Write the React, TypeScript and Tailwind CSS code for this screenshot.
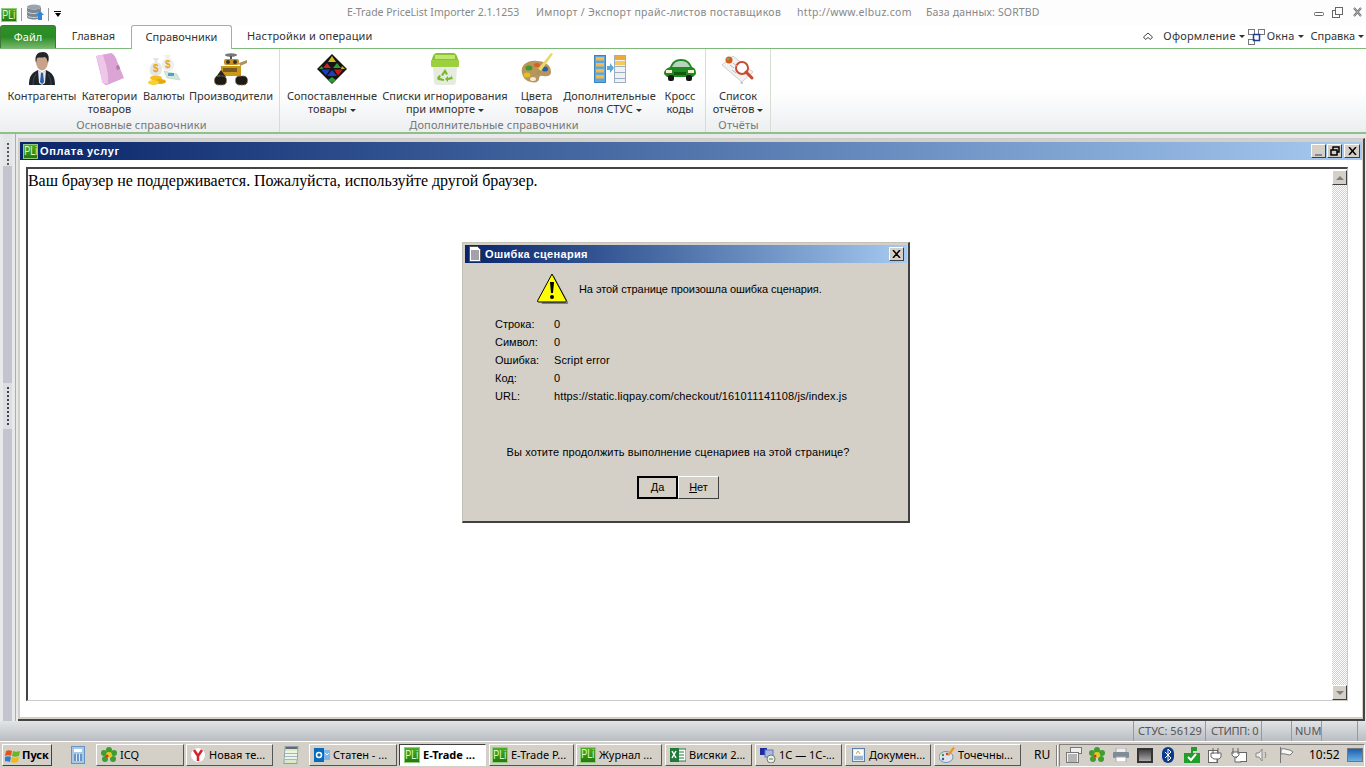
import React from "react";

const ui = "font-['Noto_Sans','Open_Sans',sans-serif]";

function PLi({ className = "" }: { className?: string }) {
  return (
    <span className={"flex items-center justify-center overflow-hidden bg-gradient-to-b from-[#4fae1e] to-[#237a0c] border border-[#8fce7a] text-[#dcf7cc] font-['Liberation_Sans',sans-serif] leading-none shrink-0 " + className}>
      <span className="scale-x-75 text-[12px]">PLi</span>
    </span>
  );
}

const Person = () => (
  <svg width="26" height="34" viewBox="0 0 26 34">
    <path d="M0 33c0-8 2-12 9-15l4 3 4-3c7 3 9 7 9 15z" fill="#1f242a" />
    <path d="M4 33c0-5 1-8 3-11M22 33c0-5-1-8-3-11" stroke="#3f4852" fill="none" />
    <path d="M9 18l4 3 4-3-1 13-3 2-3-2z" fill="#dfe6ee" />
    <path d="M12 21h2l1 9-2 2-2-2z" fill="#2a5ca6" />
    <ellipse cx="13" cy="10" rx="6" ry="8.500" fill="#c9a28c" />
    <path d="M7 11C5 3 9 0 14 0c5 0 7 4 5 11-1-3-1-5-3-6-3 1-6 0-8 1z" fill="#23262a" />
  </svg>
);
const Folder = () => (
  <svg width="30" height="32" viewBox="0 0 30 32">
    <path d="M1 3l15-3c3 1 5 4 6 8l7 17-17 7c-3 0-4-2-5-5z" fill="#dba4d5" />
    <path d="M7 30C6 20 4 11 1 3l15-3-8 2c3 9 6 19 5 29z" fill="#eec6ea" />
    <path d="M21 13l3-1 1 4-3 1z" fill="#b07aaa" />
  </svg>
);
const Money = () => (
  <svg width="34" height="31" viewBox="0 0 34 31">
    <path d="M3 14c1-4 3-5 5-6L6 4h6l-2 4c3 1 5 3 5 7 0 5-3 7-7 7s-6-3-5-8z" fill="#e6e6e2" />
    <path d="M15 9c1-3 3-4 4-5l-2-3h7l-2 3c3 1 5 4 5 7 0 4-3 6-6 6s-7-3-6-8z" fill="#efefeb" />
    <text x="6" y="18" fontSize="10" fontWeight="bold" fill="#e8a810" fontFamily="Liberation Sans">$</text>
    <text x="18" y="14" fontSize="10" fontWeight="bold" fill="#e8a810" fontFamily="Liberation Sans">$</text>
    <path d="M17 17l13 3 3 6-13-2z" fill="#cfe8d8" stroke="#b8ccb8" strokeWidth="0.500" />
    <rect x="21" y="19" width="6" height="3" fill="#4f9fd0" />
    <ellipse cx="9" cy="24" rx="6" ry="2.400" fill="#f4c020" />
    <ellipse cx="13" cy="27.500" rx="6" ry="2.400" fill="#e8a810" />
    <ellipse cx="6.500" cy="28.500" rx="5.500" ry="2.400" fill="#f8d030" />
  </svg>
);
const Robot = () => (
  <svg width="34" height="33" viewBox="0 0 34 33">
    <ellipse cx="17" cy="2" rx="6" ry="1.800" fill="#777" />
    <rect x="16" y="3" width="2" height="4" fill="#555" />
    <rect x="10" y="6" width="15" height="6" rx="2" fill="#c89020" />
    <circle cx="14" cy="9" r="2" fill="#333" />
    <circle cx="21" cy="9" r="2" fill="#333" />
    <path d="M25 10l8-3v3l-7 3z" fill="#b09060" />
    <rect x="7" y="13" width="20" height="10" fill="#c89a18" />
    <rect x="9" y="15" width="14" height="4" fill="#7a5c20" />
    <path d="M2 24l5-7 5 7z" fill="#2a2520" />
    <rect x="0.500" y="23" width="12" height="9" rx="4" fill="#1e1a16" stroke="#8b7a62" strokeDasharray="2 1" />
    <rect x="21.500" y="23" width="12" height="9" rx="4" fill="#1e1a16" stroke="#8b7a62" strokeDasharray="2 1" />
  </svg>
);
const Pyramid = () => (
  <svg width="30" height="30" viewBox="0 0 30 30">
    <path d="M15 0L30 15 15 30 0 15z" fill="#141414" />
    <path d="M15 2l4 6h-8z" fill="#d8b820" />
    <path d="M10 9l-4 5h8z" fill="#d02020" />
    <path d="M20 9l4 5h-8z" fill="#2f9a2f" />
    <path d="M4 15.500h9l-4 6z" fill="#1a40c0" />
    <path d="M26 15.500h-9l4 6z" fill="#c81818" />
    <path d="M15 16l5 6H10z" fill="#1a40c0" />
    <path d="M15 23l4 3-4 3-4-3z" fill="#2f9a2f" />
    <path d="M2 15l3-3 1 3z" fill="#2f9a2f" />
    <path d="M28 15l-3-3-1 3z" fill="#d8b820" />
  </svg>
);
const Bin = () => (
  <svg width="30" height="32" viewBox="0 0 30 32">
    <path d="M1 9l2-6C4 1 5 0 7 0h16c2 0 3 1 4 3l2 6z" fill="#86c232" />
    <rect x="1" y="7" width="28" height="7" rx="1" fill="#9dd040" />
    <rect x="5" y="2" width="20" height="4" fill="#bfe66e" />
    <path d="M3 14h24l-1 15c0 2-2 3-3 3H7c-2 0-3-1-3-3z" fill="#e6ebdf" />
    <path d="M15 16l3 5-2 1-1-2-2 3-2-1zM21 22l2 4-5 1v2l-3-3 3-3v2l3-1zM9 22l2 1-1 2 4 1v2l-6-1-1-2z" fill="#78b82c" />
  </svg>
);
const Palette = ({ s = 34 }: { s?: number }) => (
  <svg width={s} height={s * 32 / 34} viewBox="0 0 34 32">
    <path d="M2 20C0 12 8 7 17 8c8 0 14 4 14 11 0 4-4 5-8 4-3-1-4 1-4 3 0 3-4 4-8 3-5-1-8-4-9-9z" fill="#b8955a" />
    <ellipse cx="9" cy="15" rx="3.500" ry="2.500" fill="#3d9a2c" />
    <ellipse cx="17" cy="12" rx="3" ry="2" fill="#d86020" />
    <ellipse cx="7" cy="22" rx="3.500" ry="2.500" fill="#e0c020" />
    <ellipse cx="25" cy="16" rx="3" ry="2.500" fill="#2060b0" />
    <ellipse cx="13" cy="26" rx="3" ry="2" fill="#f0e8d8" />
    <path d="M31 0l2 1-12 17-3-2z" fill="#e8d86a" />
    <path d="M18 16l3 2-3 4-2-1z" fill="#b09060" />
  </svg>
);
const TrayPalette = () => (
  <svg width="16" height="16" viewBox="0 0 16 16">
    <ellipse cx="7" cy="10" rx="7" ry="5.500" fill="#dfe6f0" stroke="#7a90b0" />
    <circle cx="4" cy="8" r="1.200" fill="#3d9a2c" />
    <circle cx="8" cy="7" r="1.200" fill="#d83020" />
    <circle cx="4" cy="12" r="1.200" fill="#2060b0" />
    <path d="M14 0l2 1-6 8-2-1z" fill="#e89820" />
  </svg>
);
const Fields = () => (
  <svg width="32" height="28" viewBox="0 0 32 28">
    <rect x="0.500" y="0.500" width="11" height="27" fill="#5aa7e0" stroke="#3a84c0" />
    {[2, 8, 14, 20].map((y) => (
      <rect key={y} x="2" y={y} width="8" height="3.500" fill="#f5b848" />
    ))}
    <rect x="20.500" y="0.500" width="11" height="27" fill="#eef2f4" stroke="#9ab0c0" />
    <rect x="21" y="1" width="10" height="4" fill="#f0a838" />
    <rect x="21" y="6" width="10" height="4" fill="#f5c860" />
    <rect x="21" y="11" width="10" height="1" fill="#9ab0c0" />
    <rect x="21" y="17" width="10" height="1" fill="#9ab0c0" />
    <rect x="21" y="23" width="10" height="1" fill="#9ab0c0" />
    <path d="M13 11h3V8l4 5-4 5v-3h-3z" fill="#5aa7d8" />
  </svg>
);
const Car = () => (
  <svg width="34" height="24" viewBox="0 0 34 24">
    <path d="M1 17c0-4 3-6 6-7 2-5 5-8 11-8 6 0 9 3 11 8 3 1 4 3 4 7l-3 3H4z" fill="#1e8a20" />
    <path d="M9 10c2-4 4-6 9-6s7 2 9 6z" fill="#b8d4c0" />
    <rect x="3" y="13" width="6" height="3" fill="#f0f0d0" />
    <rect x="25" y="13" width="6" height="3" fill="#f0f0d0" />
    <rect x="11" y="15" width="12" height="3" fill="#0d5a10" />
    <rect x="5" y="18" width="6" height="6" rx="2" fill="#151515" />
    <rect x="23" y="18" width="6" height="6" rx="2" fill="#151515" />
  </svg>
);
const Report = () => (
  <svg width="34" height="30" viewBox="0 0 34 30">
    <path d="M1 11L12 2l20 16-11 10z" fill="#f2f2f0" stroke="#cfcfcf" />
    <path d="M21 28l1 2-3-1z" fill="#999" />
    <circle cx="8" cy="6" r="3.500" fill="#d85a20" />
    <circle cx="7" cy="5" r="1.500" fill="#70b040" />
    <circle cx="21" cy="14" r="6" fill="#fff" stroke="#c84a30" strokeWidth="2" />
    <path d="M25 18l6 6" stroke="#c84a30" strokeWidth="3" strokeLinecap="round" />
    <path d="M12 9l4 3M9 11l4 3M11 16l4 3" stroke="#bbb" />
  </svg>
);
const Db = () => (
  <svg width="18" height="17" viewBox="0 0 18 17">
    <ellipse cx="8" cy="3" rx="7" ry="2.500" fill="#9aa4ae" />
    <path d="M1 3v10c0 1.500 3 2.500 7 2.500s7-1 7-2.500V3c0 1.500-3 2.500-7 2.500S1 4.500 1 3z" fill="#7d8792" />
    <path d="M1 7c0 1.500 3 2.500 7 2.500s7-1 7-2.500M1 11c0 1.500 3 2.500 7 2.500s7-1 7-2.500" stroke="#d0d6dc" fill="none" />
    <path d="M14 7l4 4h-2v5h-4v-5h-2z" fill="#2e86d8" />
  </svg>
);

const Caret = ({ className = "" }: { className?: string }) => (
  <span className={"inline-block w-0 h-0 border-x-[3px] border-x-transparent border-t-[3px] border-t-[#333] align-middle " + className} />
);

function Item({ w, icon, lines, caret }: { w: string; icon: React.ReactNode; lines: string[]; caret?: boolean }) {
  return (
    <div className={"flex flex-col items-center shrink-0 " + w}>
      <div className="h-[40px] flex items-center justify-center">{icon}</div>
      <div className="text-center text-[11px] leading-[13px] text-[#333] whitespace-nowrap">
        <div>{lines[0]}</div>
        <div>
          {lines[1]}
          {caret && <Caret className="ml-[3px]" />}
        </div>
      </div>
    </div>
  );
}

function Group({ w, pl, lpl, label, children }: { w: string; pl: string; lpl: string; label: string; children: React.ReactNode }) {
  return (
    <div className={"flex flex-col border-r border-r-[#d5ddd5] shrink-0 h-[83px] " + w}>
      <div className={"flex h-[69px] " + pl}>{children}</div>
      <div className={"h-[14px] text-center text-[11px] leading-[14px] text-[#777] tracking-[0.15px] " + lpl}>{label}</div>
    </div>
  );
}

function CapBtn({ children, className = "" }: { children: React.ReactNode; className?: string }) {
  return (
    <div className={"flex items-center justify-center bg-[#d4d0c8] border border-t-white border-l-white border-r-[#404040] border-b-[#404040] " + className}>
      {children}
    </div>
  );
}

function TaskBtn({ w, ml, icon, text, active, pl = "pl-[4px]" }: { w: string; ml: string; icon: React.ReactNode; text: string; active?: boolean; pl?: string }) {
  return (
    <div
      className={
        "h-[22px] flex items-center gap-[3px] shrink-0 overflow-hidden whitespace-nowrap text-[11px] text-black border " +
        w + " " + ml + " " + pl + " " +
        (active
          ? "bg-white font-bold border-t-[#404040] border-l-[#404040] border-r-white border-b-white"
          : "bg-[#d4d0c8] border-t-white border-l-white border-r-[#555] border-b-[#555]")
      }
    >
      <span className="w-[16px] h-[16px] flex items-center justify-center shrink-0">{icon}</span>
      <span>{text}</span>
    </div>
  );
}

const Flower = ({ s = 16 }: { s?: number }) => (
  <svg width={s} height={s} viewBox="0 0 16 16">
    {[[8, 3], [13, 6], [12, 12], [4, 12], [3, 6]].map(([x, y], i) => (
      <circle key={i} cx={x} cy={y} r="3" fill="#3f9e2f" />
    ))}
    <circle cx="8" cy="8" r="3" fill="#e8c820" />
    <circle cx="6" cy="9" r="1.500" fill="#d83020" />
  </svg>
);

export default function App() {
  return (
    <div className={"relative w-[1366px] h-[768px] overflow-hidden flex flex-col bg-white " + ui}>
      {/* title row */}
      <div className="h-[25px] shrink-0 flex items-center bg-[#fdfdfd] relative">
        <PLi className="w-[16px] h-[14px] ml-[1px] mt-[4px]" />
        <div className="w-px h-[13px] bg-[#999] ml-[4px] mt-[4px]" />
        <div className="ml-[4px] mt-[-1px]"><Db /></div>
        <div className="w-px h-[13px] bg-[#999] ml-[4px] mt-[4px]" />
        <div className="ml-[5px] mt-[3px] flex flex-col items-center gap-px">
          <div className="w-[7px] h-px bg-black" />
          <div className="w-0 h-0 border-x-[3.500px] border-x-transparent border-t-[4px] border-t-black" />
        </div>
        <div className="text-[10.500px] text-[#888] whitespace-nowrap flex ml-[286px]">
          <span className="w-[189px]">E-Trade PriceList Importer 2.1.1253</span>
          <span className="w-[261px] tracking-[0.32px]">Импорт / Экспорт прайс-листов поставщиков</span>
          <span className="w-[129px] tracking-[0.3px]">http://www.elbuz.com</span>
          <span className="tracking-[0.15px]">База данных: SORTBD</span>
        </div>
        <div className="ml-auto mr-[4px] flex items-center">
          <svg width="48" height="11" viewBox="0 0 48 11" fill="none" stroke="#666">
            <rect x="0.500" y="5.500" width="9" height="3" rx="1" />
            <rect x="18.500" y="3.500" width="7" height="7" />
            <rect x="21.500" y="0.500" width="7" height="7" fill="#fdfdfd" />
            <path d="M40 1l7 8M47 1l-7 8" strokeWidth="2" />
            <path d="M40 1l7 8M47 1l-7 8" stroke="#fff" strokeWidth="0.500" />
          </svg>
        </div>
      </div>

      {/* tabs */}
      <div className="h-[24px] shrink-0 flex items-end border-b border-b-[#7fb97a] text-[11px] text-[#333] relative">
        <div className="w-[56px] h-[23px] rounded-t-[3px] bg-gradient-to-b from-[#2f8f2a] via-[#2a8a24] to-[#74b96a] text-white flex items-center justify-center border border-[#3a7a34] border-b-0">Файл</div>
        <div className="w-[75px] h-[23px] flex items-center justify-center">Главная</div>
        <div className="w-[101px] h-[24px] -mb-px bg-white rounded-t-[3px] border border-[#8cc087] border-b-0 flex items-center justify-center">Справочники</div>
        <div className="ml-[15px] h-[23px] flex items-center tracking-[0.15px]">Настройки и операции</div>
        <div className="ml-auto h-[23px] flex items-center mr-[2px]">
          <svg width="12" height="9" viewBox="0 0 12 9" fill="none" stroke="#444" className="mr-[9px]">
            <path d="M1.500 5L6 1l4.500 4-2 2.500L6 5.500 3.500 7.500z" />
          </svg>
          <span className="tracking-[0.2px]">Оформление</span>
          <Caret className="ml-[3px]" />
          <svg width="17" height="16" viewBox="0 0 17 16" fill="none" stroke="#777" className="ml-[3px]">
            <rect x="0.500" y="0.500" width="6" height="5" />
            <rect x="10.500" y="0.500" width="6" height="5" />
            <rect x="0.500" y="10.500" width="6" height="5" />
            <rect x="5.500" y="5.500" width="6" height="6" stroke="#1f3f9f" strokeWidth="1.500" />
          </svg>
          <span className="ml-[2px] tracking-[0.2px]">Окна</span>
          <Caret className="ml-[3px]" />
          <span className="ml-[7px]">Справка</span>
          <Caret className="ml-[3px]" />
        </div>
      </div>

      {/* ribbon */}
      <div className="h-[85px] shrink-0 flex bg-gradient-to-b from-white via-white to-[#eceef0] border-b-2 border-b-[#8fc08a]">
        <Group w="w-[280px]" pl="pl-[6px]" lpl="pl-[4px]" label="Основные справочники">
          <Item w="w-[72px]" icon={<Person />} lines={["Контрагенты"]} />
          <Item w="w-[63px]" icon={<Folder />} lines={["Категории", "товаров"]} />
          <Item w="w-[46px]" icon={<Money />} lines={["Валюты"]} />
          <Item w="w-[88px]" icon={<Robot />} lines={["Производители"]} />
        </Group>
        <Group w="w-[426px]" pl="pl-[5px]" lpl="pl-[3px]" label="Дополнительные справочники">
          <Item w="w-[94px]" icon={<Pyramid />} lines={["Сопоставленные", "товары"]} caret />
          <Item w="w-[132px]" icon={<Bin />} lines={["Списки игнорирования", "при импорте"]} caret />
          <Item w="w-[51px]" icon={<Palette />} lines={["Цвета", "товаров"]} />
          <Item w="w-[95px]" icon={<Fields />} lines={["Дополнительные", "поля СТУС"]} caret />
          <Item w="w-[46px]" icon={<Car />} lines={["Кросс", "коды"]} />
        </Group>
        <Group w="w-[65px]" pl="pl-0" lpl="pl-[1px]" label="Отчёты">
          <Item w="w-[64px]" icon={<Report />} lines={["Список", "отчётов"]} caret />
        </Group>
      </div>

      {/* MDI area */}
      <div className="flex-1 min-h-0 flex bg-[#e8e9eb] pt-[4px]">
        {/* left dock strip */}
        <div className="w-[16px] shrink-0 -mt-[4px] flex pl-[3px]">
          <div className="w-[9px] bg-[#c2c5ce] flex flex-col items-center relative">
            <div className="h-[32px] w-full bg-[#e4e5e9] flex flex-col items-center gap-[2px] pt-[9px]">
              {[0, 1, 2, 3, 4, 5].map((i) => (
                <div key={i} className="w-[2px] h-[2px] bg-[#555]" />
              ))}
            </div>
            <div className="h-[217px]" />
            <div className="h-[46px] w-full bg-[#dcdee3] flex flex-col items-center justify-center gap-[2px]">
              {[0, 1, 2, 3, 4, 5, 6, 7, 8, 9].map((i) => (
                <div key={i} className="w-[2px] h-[2px] bg-[#444]" />
              ))}
            </div>
          </div>
          <div className="ml-[3px] w-px bg-[#a8a9cc]" />
        </div>
        {/* child window */}
        <div className="flex-1 min-w-0 ml-[2px] mr-[1px] bg-[#d4d0c8] border-r-2 border-b-2 border-r-[#444] border-b-[#444] pl-[2px] pt-[1px] pr-[1px] pb-[2px] flex flex-col border-t border-t-[#ccc] h-[583px]">
          <div className="h-[18px] mt-[2px] shrink-0 flex items-center bg-gradient-to-r from-[#0a246a] to-[#a6caf0]">
            <PLi className="w-[15px] h-[15px] ml-[3px]" />
            <span className="ml-[2px] text-[11px] font-bold text-white font-['Liberation_Sans',sans-serif] tracking-[0.6px]">Оплата услуг</span>
            <div className="ml-auto mr-[2px] flex items-center gap-[1px]">
              <CapBtn className="w-[15px] h-[14px] items-end pb-[1px]"><div className="w-[7px] h-[2px] bg-[#888]" /></CapBtn>
              <CapBtn className="w-[15px] h-[14px]">
                <svg width="10" height="10" viewBox="0 0 10 10" fill="none" stroke="#000"><rect x="3" y="1" width="6" height="5" strokeWidth="1.500" /><rect x="1" y="4" width="6" height="5" fill="#d4d0c8" strokeWidth="1.500" /></svg>
              </CapBtn>
              <CapBtn className="w-[16px] h-[14px] ml-[1px]">
                <svg width="9" height="8" viewBox="0 0 9 8" stroke="#000" strokeWidth="1.500"><path d="M1 0l7 8M8 0L1 8" /></svg>
              </CapBtn>
            </div>
          </div>
          <div className="flex-1 min-h-0 bg-white pl-[6px] pt-[7px] pr-[14px] pb-[16px] flex">
            <div className="flex-1 min-w-0 border-t-2 border-l-2 border-t-[#444] border-l-[#444] border-b border-r border-b-[#ccc] border-r-[#ccc] flex">
              <div className="flex-1 pt-[3px] font-['Liberation_Serif',serif] text-[16px] leading-[18px] tracking-[-0.06px] text-black whitespace-nowrap">
                Ваш браузер не поддерживается. Пожалуйста, используйте другой браузер.
              </div>
              <div className="w-[15px] shrink-0 flex flex-col mt-px bg-[repeating-conic-gradient(#d4d0c8_0_25%,#ffffff_0_50%)] bg-[length:2px_2px]">
                <CapBtn className="h-[15px] shrink-0"><div className="w-0 h-0 border-x-[4px] border-x-transparent border-b-[4px] border-b-[#808080]" /></CapBtn>
                <div className="flex-1" />
                <CapBtn className="h-[15px] shrink-0"><div className="w-0 h-0 border-x-[4px] border-x-transparent border-t-[4px] border-t-[#808080]" /></CapBtn>
              </div>
            </div>
          </div>
        </div>
      </div>

      {/* status bar */}
      <div className="h-[21px] shrink-0 flex items-stretch bg-gradient-to-b from-[#e2e4e6] to-[#b9bdc1] text-[11px] text-[#555] whitespace-nowrap border-b border-b-white">
        <div className="w-[1133px]" />
        <div className="w-[72px] border-l border-l-[#999] pl-[4px] flex items-center">СТУС: 56129</div>
        <div className="w-[56px] border-l border-l-[#999] pl-[5px] flex items-center tracking-[-0.3px]">СТИПП: 0</div>
        <div className="w-[30px] border-l border-l-[#999]" />
        <div className="w-[30px] border-l border-l-[#999] pl-[3px] flex items-center">NUM</div>
        <div className="w-[36px] border-l border-l-[#999]" />
        <div className="flex-1 border-l border-l-[#999]" />
      </div>

      {/* taskbar */}
      <div className="h-[26px] shrink-0 bg-[#d4d0c8] flex items-center">
        <div className="ml-[2px] w-[50px] h-[22px] shrink-0 flex items-center gap-[1px] pl-[2px] bg-[#d4d0c8] border border-t-white border-l-white border-r-[#404040] border-b-[#404040] text-[11px] font-bold text-black">
          <svg width="16" height="15" viewBox="0 0 16 15">
            <path d="M1 3c2-1 4-1 6 0l-1 5c-2-1-4-1-6 0z" fill="#e8501c" />
            <path d="M8 3c2 1 4 1 7 0l-1 5c-3 1-5 1-7 0z" fill="#6cb428" />
            <path d="M0 9c2-1 4-1 6 0l-1 5c-2-1-4-1-6 0z" fill="#2c7fd0" />
            <path d="M7 9c2 1 4 1 7 0l-1 5c-3 1-5 1-7 0z" fill="#f0b818" />
          </svg>
          <span>Пуск</span>
        </div>
        <div className="ml-[19px] w-[14px] h-[18px] shrink-0 bg-[#a8c8e8] border border-[#6a94c0] p-[2px]">
          <div className="h-[3px] bg-white" />
          <div className="mt-[2px] h-[7px] bg-[repeating-linear-gradient(90deg,#6a94c0_0_2px,#dcebf8_2px_3px)]" />
        </div>
        <TaskBtn ml="ml-[11px]" w="w-[88px]" icon={<Flower />} text="ICQ" />
        <TaskBtn ml="ml-[2px]" w="w-[87px]" text="Новая те..." pl="pl-[3px]" icon={
          <svg width="16" height="16" viewBox="0 0 16 16"><circle cx="8" cy="8" r="7.500" fill="#fff" stroke="#ccc" /><path d="M4 3l4 6 4-6M8 9v5" stroke="#d8232a" strokeWidth="2.500" fill="none" /></svg>
        } />
        <div className="ml-[11px] w-[14px] h-[18px] shrink-0 bg-[#dde8c8] border border-[#8aa0a8] skew-x-[-4deg]">
          <div className="h-[2px] bg-[#667]" />
          <div className="mt-[2px] h-[9px] bg-[repeating-linear-gradient(0deg,#9ab8d0_0_1px,#eef4e0_1px_3px)]" />
        </div>
        <TaskBtn ml="ml-[11px]" w="w-[88px]" text="Статен - ..." icon={
          <svg width="16" height="16" viewBox="0 0 16 16"><rect x="5" y="3" width="11" height="10" fill="#7ab8e8" /><rect x="0" y="1" width="10" height="14" fill="#0a6abc" /><circle cx="5" cy="8" r="2.500" fill="none" stroke="#fff" strokeWidth="1.500" /><path d="M11 6l2 2 2-2" stroke="#fff" fill="none" /></svg>
        } />
        <TaskBtn ml="ml-[2px]" w="w-[87px]" text="E-Trade ..." active icon={<PLi className="w-[16px] h-[16px] font-normal" />} />
        <TaskBtn ml="ml-[3px]" w="w-[85px]" text="E-Trade P..." pl="pl-[2px]" icon={<PLi className="w-[16px] h-[16px]" />} />
        <TaskBtn ml="ml-[2px]" w="w-[86px]" text="Журнал ..." pl="pl-[3px]" icon={<PLi className="w-[16px] h-[16px] items-start" />} />
        <TaskBtn ml="ml-[3px]" w="w-[87px]" text="Висяки 2..." icon={
          <svg width="16" height="16" viewBox="0 0 16 16"><rect x="7" y="2" width="9" height="12" fill="#fff" stroke="#1f7a3a" /><path d="M9 5h5M9 8h5M9 11h5" stroke="#1f7a3a" /><rect x="0" y="1" width="9" height="14" fill="#1f7a3a" /><path d="M2 4l4 7M6 4l-4 7" stroke="#fff" strokeWidth="1.500" /></svg>
        } />
        <TaskBtn ml="ml-[3px]" w="w-[87px]" text="1С — 1С-..." icon={
          <svg width="16" height="16" viewBox="0 0 16 16"><rect x="0" y="1" width="7" height="7" fill="#1a2ea0" /><rect x="5" y="3" width="8" height="7" fill="#a8b8e0" stroke="#6878b8" /><circle cx="11" cy="12" r="4" fill="#eef2ea" stroke="#777" /><path d="M9 12h4" stroke="#3a8a2a" /></svg>
        } />
        <TaskBtn ml="ml-[3px]" w="w-[86px]" text="Докумен..." icon={
          <svg width="16" height="16" viewBox="0 0 16 16"><rect x="2.500" y="1.500" width="12" height="13" fill="#dfeaf6" stroke="#5a7fa8" /><rect x="4" y="3" width="9" height="5" fill="#fff" /><path d="M6 7l2-3 2 3" stroke="#d8a020" fill="none" /><path d="M4 10h9M4 12h9" stroke="#5a7fa8" /></svg>
        } />
        <TaskBtn ml="ml-[3px]" w="w-[87px]" text="Точечны..." icon={<TrayPalette />} />
        <div className="ml-[13px] w-[20px] text-[12px] text-black shrink-0">RU</div>
        <div className="ml-[2px] w-[2px] h-[21px] border-l border-l-[#808080] border-r border-r-white shrink-0" />
        <div className="ml-[1px] flex-1 mr-[1px] h-[23px] flex items-center border border-t-[#808080] border-l-[#808080] border-r-white border-b-white relative">
          <div className="ml-[6px] shrink-0">
            <svg width="16" height="16" viewBox="0 0 16 16" fill="none" stroke="#777"><rect x="4.500" y="0.500" width="11" height="6" fill="#eee" /><rect x="0.500" y="5.500" width="12" height="10" fill="#f4f4f4" /><path d="M2 8h9M2 10h9M2 12h9M2 14h9" /></svg>
          </div>
          <div className="ml-[7px] shrink-0"><Flower /></div>
          <div className="ml-[8px] shrink-0">
            <svg width="16" height="14" viewBox="0 0 16 14"><rect x="3" y="0" width="10" height="5" fill="#eee" stroke="#aaa" /><rect x="0" y="4" width="16" height="6" rx="1" fill="#7f8c98" /><rect x="3" y="9" width="10" height="5" fill="#fff" stroke="#aaa" /></svg>
          </div>
          <div className="ml-[8px] w-[16px] h-[15px] shrink-0 bg-gradient-to-b from-[#444] to-[#aaa] border-2 border-[#333]" />
          <div className="ml-[8px] shrink-0">
            <svg width="14" height="16" viewBox="0 0 14 16"><rect x="1" y="0" width="12" height="16" rx="6" fill="#0a3a8a" /><path d="M4 5l6 6-3 3V2l3 3-6 6" stroke="#fff" fill="none" /></svg>
          </div>
          <div className="ml-[9px] shrink-0">
            <svg width="16" height="16" viewBox="0 0 16 16"><path d="M7 0h6v4H9v2h7v10H0V6h7z" fill="#1f9e2a" /><path d="M4 10l3 3 5-6" stroke="#fff" strokeWidth="2" fill="none" /></svg>
          </div>
          <div className="ml-[7px] shrink-0">
            <svg width="16" height="16" viewBox="0 0 16 16" fill="#fff" stroke="#666"><rect x="1.500" y="3.500" width="9" height="12" /><path d="M6 1v6M11 1v6M4 6h10v4l-2 2H7l-3-2zM10 12v3" /></svg>
          </div>
          <div className="ml-[8px] shrink-0">
            <svg width="16" height="16" viewBox="0 0 16 16" fill="#fff" stroke="#666"><rect x="5.500" y="5.500" width="10" height="9" /><path d="M2 1v6M7 1v6M1 5h7v3l-2 2H3L1 8zM4 10v5h6" /></svg>
          </div>
          <div className="ml-[8px] shrink-0">
            <svg width="14" height="14" viewBox="0 0 14 14" fill="none" stroke="#888"><path d="M1 5h3l3-4v12l-3-4H1z" fill="#eee" /><path d="M10 4c1 2 1 4 0 6" /></svg>
          </div>
          <div className="ml-[10px] shrink-0">
            <svg width="16" height="16" viewBox="0 0 16 16" fill="#f8f8f8" stroke="#777"><path d="M1.500 0v16M2 2c4-1 6 1 9 1l3 2-3 3c-3 0-5-2-9-1z" /></svg>
          </div>
          <div className="ml-[14px] text-[12px] text-black shrink-0">10:52</div>
          <div className="ml-[7px] w-[16px] h-[14px] shrink-0 bg-gradient-to-b from-[#1a5fb0] to-[#6ab0e0] border border-[#777]" />
        </div>
      </div>

      {/* script error dialog */}
      <div className="absolute left-[462px] top-[242px] w-[448px] h-[281px] bg-[#d4d0c8] border border-t-[#c4c1b9] border-l-[#c4c1b9] border-r-2 border-b-2 border-r-[#404040] border-b-[#404040] pl-[2px] pr-[1px] pt-[2px] flex flex-col font-['Liberation_Sans',sans-serif] text-[11px] text-black">
        <div className="h-[18px] shrink-0 flex items-center bg-gradient-to-r from-[#0a246a] to-[#a6caf0]">
          <svg width="14" height="16" viewBox="0 0 14 16" className="ml-[3px]">
            <path d="M1.500 0.500h8l3 3v12h-11z" fill="#fff" stroke="#555" />
            <path d="M3 5h8M3 7h8M3 9h8M3 11h8M3 13h8" stroke="#445" />
          </svg>
          <span className="ml-[3px] font-bold text-white tracking-[0.35px]">Ошибка сценария</span>
          <CapBtn className="ml-auto mr-[3px] w-[15px] h-[14px]">
            <svg width="9" height="8" viewBox="0 0 9 8" stroke="#000" strokeWidth="1.500"><path d="M1 0l7 8M8 0L1 8" /></svg>
          </CapBtn>
        </div>
        <div className="flex items-center pl-[71px] pt-[10px] h-[43px] shrink-0">
          <svg width="34" height="33" viewBox="0 0 34 33">
            <path d="M18 3l14 26c.500 1.500 0 2-1.500 2h-25z" fill="#808080" />
            <path d="M16 1L30 27c.500 1.500 0 2-1 2H3c-1.500 0-2-.500-1-2z" fill="#ffff00" stroke="#000" />
            <path d="M14 9h4l-1 11h-2z" fill="#000" />
            <circle cx="16" cy="24" r="2" fill="#000" />
          </svg>
          <span className="ml-[9px] tracking-[-0.07px]">На этой странице произошла ошибка сценария.</span>
        </div>
        <div className="pl-[30px] pt-[9px] shrink-0 leading-[18px]">
          {[
            ["Строка:", "0"],
            ["Символ:", "0"],
            ["Ошибка:", "Script error"],
            ["Код:", "0"],
            ["URL:", "https://static.liqpay.com/checkout/161011141108/js/index.js"],
          ].map(([a, b]) => (
            <div key={a} className="flex h-[18px]">
              <span className="w-[59px]">{a}</span>
              <span className="tracking-[0.12px]">{b}</span>
            </div>
          ))}
        </div>
        <div className="text-center mt-[40px] pr-[16px] leading-[14px] tracking-[0.12px] shrink-0">Вы хотите продолжить выполнение сценариев на этой странице?</div>
        <div className="flex justify-center mt-[17px] pr-[16px]">
          <div className="w-[41px] h-[23px] flex items-center justify-center border-2 border-black bg-[#d4d0c8]"><span className="underline">Д</span>а</div>
          <div className="w-[41px] h-[23px] flex items-center justify-center border border-t-white border-l-white border-r-[#404040] border-b-[#404040] bg-[#d4d0c8]"><span className="underline">Н</span>ет</div>
        </div>
      </div>
    </div>
  );
}
